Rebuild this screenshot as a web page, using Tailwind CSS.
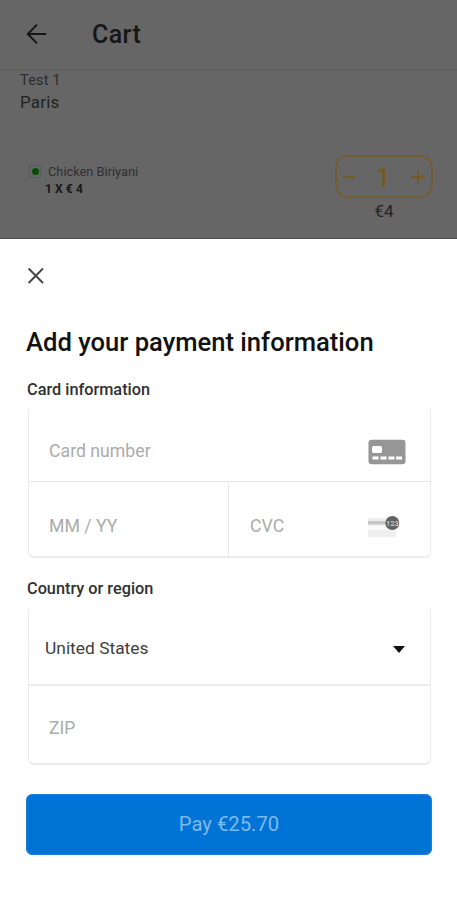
<!DOCTYPE html>
<html lang="en">
<head>
<meta charset="utf-8">
<title>Cart</title>
<script src="https://cdn.jsdelivr.net/npm/@tailwindcss/browser@4"></script>
</head>
<body class="w-[457px] h-[900px] overflow-hidden bg-white font-['Roboto','Noto_Sans',sans-serif] flex flex-col">
  <!-- Dimmed cart screen -->
  <div class="h-[239px] shrink-0 bg-[#666666] border-b border-[#4e4e4e] flex flex-col">
    <header class="h-[71px] shrink-0 border-b-2 border-[#5e5e5e] flex items-center pl-[26px]">
      <svg class="w-[21px] h-[22px] -mt-0.5" viewBox="0 0 21 22" fill="none" stroke="#161616" stroke-width="2"><path d="M20.2 11H2M11 1.6L1.8 11L11 20.4"/></svg>
      <h1 class="ml-[45px] text-[25px] leading-7 font-medium tracking-[0.4px] text-[#161616]">Cart</h1>
    </header>
    <div class="pl-5 text-[#222222]">
      <p class="mt-px text-[14.5px] leading-[18px] tracking-[0.2px] text-[#2c2c2c]">Test 1</p>
      <p class="mt-[2px] text-[17px] leading-5 tracking-[0.2px]">Paris</p>
    </div>
    <div class="mt-[43px] flex justify-between pl-[29px] pr-6">
      <div class="pt-[9px]">
        <div class="flex items-center">
          <span class="w-3 h-[13px] -mt-px border border-[#53605a] flex items-center justify-center"><span class="size-[7px] rounded-full bg-[#0a4d0a]"></span></span>
          <span class="ml-[7px] text-[12.8px] leading-4 text-[#303030]">Chicken Biriyani</span>
        </div>
        <p class="ml-4 mt-px text-[12px] leading-4 font-bold tracking-[0.1px] text-[#181818]">1 X € 4</p>
      </div>
      <div class="flex flex-col items-center">
        <div class="w-[98px] h-[43px] rounded-[13px] border-2 border-[#745d36] flex items-center justify-between px-[5px] text-[#795710]">
          <svg class="w-[14px] h-[14px]" viewBox="0 0 14 14" stroke="currentColor" stroke-width="1.4"><path d="M1 7H13"/></svg>
          <span class="text-[26px] leading-8 pt-0.5">1</span>
          <svg class="w-[16px] h-[16px]" viewBox="0 0 16 16" stroke="currentColor" stroke-width="1.3"><path d="M1 8H15M8 1V15"/></svg>
        </div>
        <p class="mt-[3px] text-[17px] leading-5 text-[#242424]">€4</p>
      </div>
    </div>
  </div>

  <!-- Payment sheet -->
  <main class="px-[26px] pt-7 flex flex-col">
    <svg class="w-5 h-[18px]" viewBox="0 0 20 18" fill="none" stroke="#444" stroke-width="1.9"><path d="M2.6 1.5L17 16M17 1.5L2.6 16"/></svg>
    <h2 class="mt-[41px] text-[25.6px] leading-8 font-medium text-[#111] whitespace-nowrap">Add your payment information</h2>
    <h3 class="mt-[22px] ml-px text-[16.3px] leading-5 font-medium text-[#303030]">Card information</h3>

    <section class="mt-[9px] ml-[2px] w-[403px] h-[149px] flex flex-col rounded-b-[6px] border border-t-0 border-b-2 border-[#ececec]">
      <div class="h-[73px] border-b border-[#e8e8e8] flex items-center justify-between pl-5 pr-6 pt-[13px]">
        <span class="text-[17.7px] text-[#ababab]">Card number</span>
        <svg class="w-[38px] h-[26px]" viewBox="0 0 38 26"><rect x=".5" y=".8" width="37" height="24.4" rx="3" fill="#969696"/><g fill="#fff"><rect x="4" y="7" width="10" height="7" rx="1.5"/><rect x="4.5" y="17.5" width="6" height="3"/><rect x="12.5" y="17.5" width="6" height="3"/><rect x="20.5" y="17.5" width="6" height="3"/><rect x="28" y="17.5" width="6" height="3"/></g></svg>
      </div>
      <div class="flex-1 flex">
        <div class="w-[200px] border-r border-[#e8e8e8] flex items-center pl-5 pt-[15px]"><span class="text-[17.7px] text-[#ababab]">MM / YY</span></div>
        <div class="flex-1 flex items-center justify-between pl-[21px] pr-[29px] pt-[15px]">
          <span class="text-[17.7px] text-[#ababab]">CVC</span>
          <svg class="w-[33px] h-[24px]" viewBox="0 0 33 24"><rect x="0" y="3" width="28" height="19" rx="1.5" fill="#efefef"/><path d="M0 7.8H20" stroke="#c4c4c4" stroke-width="3.4"/><path d="M0 12.8H28" stroke="#fafafa" stroke-width="4"/><circle cx="24.3" cy="8" r="7" fill="#616161"/><text x="24.3" y="10.9" text-anchor="middle" font-size="7.5" font-weight="500" fill="#d4d4d4">123</text></svg>
        </div>
      </div>
    </section>

    <h3 class="mt-[21px] ml-px text-[16.3px] leading-5 font-medium text-[#303030]">Country or region</h3>

    <section class="mt-[10px] ml-[2px] w-[403px] h-[156px] flex flex-col rounded-b-[6px] border border-t-0 border-b-2 border-[#ececec]">
      <div class="h-[77px] border-b-2 border-[#ececec] flex items-center justify-between pl-4 pr-[25px] pt-[3px]">
        <span class="text-[17.4px] text-[#404040]">United States</span>
        <svg class="w-3 h-[7px] mt-0.5" viewBox="0 0 12 7"><path d="M0 0H12L6 7Z" fill="#111"/></svg>
      </div>
      <div class="flex-1 flex items-center pl-5 pt-[8px]"><span class="text-[17.5px] text-[#ababab]">ZIP</span></div>
    </section>

    <button class="mt-[29px] w-[406px] h-[61px] rounded-[6px] bg-[#0074d6] border border-[#1d7fd8] text-[20.3px] text-[#7fb9ea]">Pay €25.70</button>
  </main>
</body>
</html>
